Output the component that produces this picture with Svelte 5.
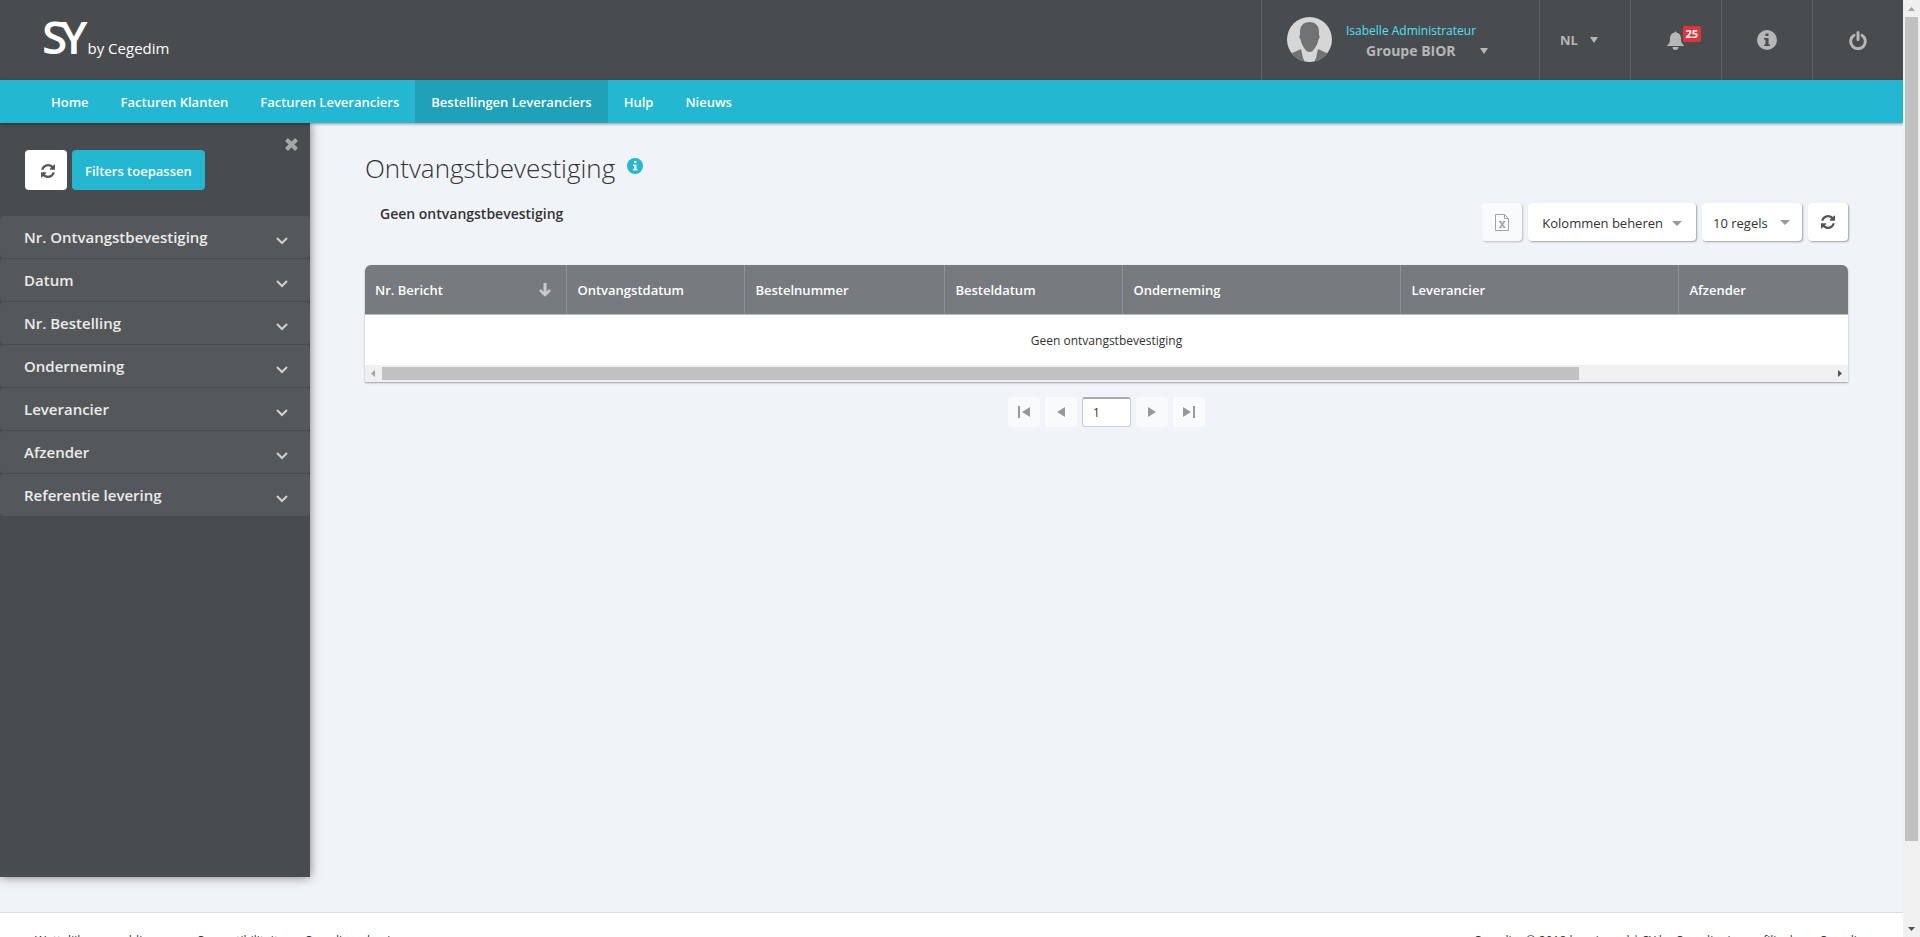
<script>
  const navItems = [
    'Home',
    'Facturen Klanten',
    'Facturen Leveranciers',
    'Bestellingen Leveranciers',
    'Hulp',
    'Nieuws'
  ];

  const filters = [
    'Nr. Ontvangstbevestiging',
    'Datum',
    'Nr. Bestelling',
    'Onderneming',
    'Leverancier',
    'Afzender',
    'Referentie levering'
  ];

  const columns = [
    { label: 'Nr. Bericht', width: 202, sorted: true },
    { label: 'Ontvangstdatum', width: 178 },
    { label: 'Bestelnummer', width: 200 },
    { label: 'Besteldatum', width: 178 },
    { label: 'Onderneming', width: 278 },
    { label: 'Leverancier', width: 278 },
    { label: 'Afzender', width: 169 }
  ];
  const total = columns.reduce((sum, c) => sum + c.width, 0);

  let active = 'Bestellingen Leveranciers';
  let sidebarOpen = true;
  let openFilter = null;
  let pageNumber = '1';
  let pageSize = '10 regels';

  const toggleFilter = (name) => {
    openFilter = openFilter === name ? null : name;
  };
</script>

{#snippet refreshIcon()}
  <svg width="14" height="14" viewBox="0 0 1536 1536" aria-hidden="true">
    <path
      fill="currentColor"
      d="M1511 928q0 5-1 7-64 268-268 434.500T764 1536q-146 0-282.500-55T238 1324l-129 129q-19 19-45 19t-45-19-19-45V960q0-26 19-45t45-19h448q26 0 45 19t19 45-19 45l-137 137q71 66 161 102t187 36q134 0 250-65t186-179q11-17 53-117 8-23 30-23h192q13 0 22.500 9.500t9.500 22.500zm25-800v448q0 26-19 45t-45 19h-448q-26 0-45-19t-19-45 19-45l138-138Q969 256 768 256q-134 0-250 65T332 500q-11 17-53 117-8 23-30 23H50q-13 0-22.500-9.500T18 608v-7q65-268 270-434.500T768 0q146 0 284 55.500T1297 212l130-129q19-19 45-19t45 19 19 45z"
    />
  </svg>
{/snippet}

{#snippet caret(width, height)}
  <svg {width} {height} viewBox="0 0 10 10" preserveAspectRatio="none" aria-hidden="true">
    <path fill="currentColor" d="M0 0h10L5 10z" />
  </svg>
{/snippet}

<div class="window">
  <div class="page">
    <header class="topbar">
      <a class="logo" href="#home" aria-label="SY by Cegedim">
        <span class="mark"><span>S</span><span class="mark-y">Y</span></span>
        <span class="by">by Cegedim</span>
      </a>
      <div class="tools">
        <button class="tool user">
          <svg class="avatar" width="45" height="45" viewBox="0 0 45 45" aria-hidden="true">
            <defs>
              <clipPath id="face"><circle cx="22.500" cy="22.500" r="22.500" /></clipPath>
            </defs>
            <g clip-path="url(#face)">
              <rect width="45" height="45" fill="#d6d6d6" />
              <path fill="#717273" d="M22.500 5c6 0 9.500 4 9.500 9.500v4c1 0 1 2-.5 4-1 5-3.500 9-6 11.500q-3 2-6 0c-2.500-2.500-5-6.500-6-11.500-1.500-2-1.500-4-.5-4v-4C13 9 16.500 5 22.500 5z" />
              <path fill="#717273" d="M14 32L3 37v8h15l-2-4zM31 32l11 5v8H27l2-4z" />
            </g>
          </svg>
          <span class="who">
            <span class="name">Isabelle Administrateur</span>
            <span class="group">Groupe BIOR {@render caret(8, 6)}</span>
          </span>
        </button>
        <button class="tool lang">NL {@render caret(8, 6)}</button>
        <button class="tool" aria-label="Meldingen">
          <span class="bell">
            <svg width="17" height="19" viewBox="0 0 17 19" aria-hidden="true">
              <path fill="currentColor" d="M7.500 1.500a1 1 0 0 1 2 0C13 2.300 14 5 14 8c0 3.500 1 5 3 6.500V15H0v-.5C2 13 3 11.500 3 8c0-3 1-5.700 4.500-6.500zM5.500 16h6c0 1.800-1.300 3-3 3s-3-1.200-3-3z" />
            </svg>
            <span class="badge">25</span>
          </span>
        </button>
        <button class="tool" aria-label="Informatie">
          <svg width="20" height="20" viewBox="0 0 20 20" aria-hidden="true">
            <circle cx="10" cy="10" r="10" fill="currentColor" />
            <path fill="#494c4e" d="M8.500 3.500h3v2.500h-3zM7 8h4.500v6.500H13V16H7v-1.500h1.500v-5H7z" />
          </svg>
        </button>
        <button class="tool" aria-label="Afmelden">
          <svg width="18" height="19" viewBox="0 0 18 19" fill="none" stroke="currentColor" stroke-width="3" stroke-linecap="round" aria-hidden="true">
            <path d="M5 4.300a7.300 7.300 0 1 0 8 0M9 1.500v7" />
          </svg>
        </button>
      </div>
    </header>

    <nav class="menu">
      {#each navItems as item}
        <a href="#menu" class:active={item === active} on:click={() => (active = item)}>{item}</a>
      {/each}
    </nav>

    <div class="body">
      {#if sidebarOpen}
        <aside class="sidebar">
          <button class="close" aria-label="Sluiten" on:click={() => (sidebarOpen = false)}>
            <svg width="13" height="13" viewBox="0 0 13 13" stroke="currentColor" stroke-width="4" aria-hidden="true">
              <path d="M1.500 1.500l10 10M11.500 1.500l-10 10" />
            </svg>
          </button>
          <div class="actions">
            <button class="reset" aria-label="Filters wissen">{@render refreshIcon()}</button>
            <button class="apply">Filters toepassen</button>
          </div>
          <div class="filters">
            {#each filters as filter}
              <button aria-expanded={openFilter === filter} on:click={() => toggleFilter(filter)}>
                {filter}
                <svg width="12" height="8" viewBox="0 0 12 8" fill="none" stroke="currentColor" stroke-width="2" aria-hidden="true">
                  <path d="M1 1l5 5 5-5" />
                </svg>
              </button>
            {/each}
          </div>
        </aside>
      {/if}

      <main>
        <h1>
          Ontvangstbevestiging
          <svg width="16" height="16" viewBox="0 0 16 16" aria-hidden="true">
            <circle cx="8" cy="8" r="8" fill="#23b7d1" />
            <path fill="#eef3f9" d="M7 3h2.500v2H7zM6 6.500h3.500V11h1v1.500H6V11h1V8H6z" />
          </svg>
        </h1>

        <div class="toolbar">
          <h2>Geen ontvangstbevestiging</h2>
          <div class="buttons">
            <button class="btn square" disabled aria-label="Exporteren naar Excel">
              <svg width="14" height="17" viewBox="0 0 14 17" fill="none" stroke="#777" aria-hidden="true">
                <path d="M.5 .5h9l4 4v12H.5zM9.500 .5v4h4M4 7.500h2.500M8 7.500h2.500M4 13.500h2.500M8 13.500h2.500" />
                <path stroke-width="1.400" d="M5 7.500l4.500 6M9.500 7.500l-4.500 6" />
              </svg>
            </button>
            <button class="btn">Kolommen beheren <span class="arrow">{@render caret(10, 5)}</span></button>
            <span class="pick">
              <select class="btn" bind:value={pageSize} aria-label="Aantal regels">
                <option>10 regels</option>
                <option>25 regels</option>
                <option>50 regels</option>
              </select>
              <span class="arrow pick-arrow">{@render caret(10, 5)}</span>
            </span>
            <button class="btn square" aria-label="Vernieuwen">{@render refreshIcon()}</button>
          </div>
        </div>

        <div class="grid">
          <table>
            <colgroup>
              {#each columns as column}
                <col style="width: {(column.width / total) * 100}%" />
              {/each}
            </colgroup>
            <thead>
              <tr>
                {#each columns as column}
                  <th scope="col">
                    <span class="head">
                      {column.label}
                      {#if column.sorted}
                        <svg width="12" height="14" viewBox="0 0 12 14" fill="none" stroke="#c9cbcd" aria-hidden="true">
                          <path stroke-width="3" d="M6 0v11" />
                          <path stroke-width="2.500" d="M1 7l5 5 5-5" />
                        </svg>
                      {/if}
                    </span>
                  </th>
                {/each}
              </tr>
            </thead>
            <tbody>
              <tr>
                <td colspan={columns.length}>Geen ontvangstbevestiging</td>
              </tr>
            </tbody>
          </table>
          <div class="hscroll">
            <svg width="17" height="17" viewBox="0 0 17 17" aria-hidden="true">
              <path fill="#a3a3a3" d="M10 5v7L6 8.500z" />
            </svg>
            <div class="track"><div class="thumb"></div></div>
            <svg width="17" height="17" viewBox="0 0 17 17" aria-hidden="true">
              <path fill="#505050" d="M7 5v7l4-3.500z" />
            </svg>
          </div>
        </div>

        <div class="pager">
          <button aria-label="Eerste pagina">
            <svg width="12" height="12" viewBox="0 0 12 12" aria-hidden="true"><path fill="currentColor" d="M0 0h2v12H0zM12 1v10L4 6z" /></svg>
          </button>
          <button aria-label="Vorige pagina">
            <svg width="8" height="10" viewBox="0 0 8 10" aria-hidden="true"><path fill="currentColor" d="M8 0v10L0 5z" /></svg>
          </button>
          <input type="text" bind:value={pageNumber} aria-label="Pagina" />
          <button aria-label="Volgende pagina">
            <svg width="8" height="10" viewBox="0 0 8 10" aria-hidden="true"><path fill="currentColor" d="M0 0v10l8-5z" /></svg>
          </button>
          <button aria-label="Laatste pagina">
            <svg width="12" height="12" viewBox="0 0 12 12" aria-hidden="true"><path fill="currentColor" d="M10 0h2v12h-2zM0 1v10l8-5z" /></svg>
          </button>
        </div>
      </main>
    </div>

    <footer>
      <div class="links">
        <a href="#legal">Wettelijke vermeldingen</a>
        <a href="#compat">Compatibiliteit</a>
        <a href="#cegedim">Cegedim e-business</a>
      </div>
      <span>Cegedim © 2018 hernieuwd | SY by Cegedim is een filiaal van Cegedim</span>
    </footer>
  </div>

  <div class="vscroll">
    <svg width="17" height="17" viewBox="0 0 17 17" aria-hidden="true">
      <path fill="#a3a3a3" d="M5 11h7L8.500 7z" />
    </svg>
    <div class="vtrack"><div class="vthumb"></div></div>
    <svg width="17" height="17" viewBox="0 0 17 17" aria-hidden="true">
      <path fill="#505050" d="M5 7h7l-3.500 4z" />
    </svg>
  </div>
</div>

<style>
  :global(body) {
    margin: 0;
    background: #f0f3f8;
  }

  .window {
    display: flex;
    height: 100vh;
    overflow: hidden;
    font-family: "Open Sans", "Noto Sans", sans-serif;
    font-size: 13px;
    color: #333;
  }

  .page {
    flex: 1;
    min-width: 0;
    display: flex;
    flex-direction: column;
    overflow: hidden;
  }

  button,
  select,
  input {
    font: inherit;
    color: inherit;
    margin: 0;
    border: 0;
    padding: 0;
    background: none;
  }

  button {
    cursor: pointer;
  }

  a {
    color: inherit;
    text-decoration: none;
  }

  svg {
    flex: none;
  }

  .topbar {
    flex: none;
    display: flex;
    justify-content: space-between;
    height: 80px;
    background: #494c4e;
    color: #b5b7b8;
  }

  .logo {
    display: flex;
    align-items: baseline;
    padding-left: 42px;
    color: #fff;
  }

  .mark {
    font-size: 46px;
    font-weight: 600;
    line-height: 72px;
  }

  .mark-y {
    margin-left: -7px;
  }

  .by {
    font-size: 15px;
  }

  .tools {
    display: flex;
  }

  .tool {
    display: flex;
    align-items: center;
    justify-content: center;
    width: 91px;
    border-left: 1px solid #5d6062;
  }

  .user {
    justify-content: flex-start;
    gap: 15px;
    width: 278px;
    padding: 0 0 2px 25px;
    gap: 14px;
  }

  .who {
    display: flex;
    flex-direction: column;
    padding-top: 4px;
    line-height: 20px;
    text-align: left;
  }

  .name {
    font-size: 12px;
    color: #4de1f5;
  }

  .group {
    display: flex;
    align-items: center;
    gap: 24px;
    padding-left: 20px;
    font-size: 14px;
    font-weight: 700;
  }

  .lang {
    gap: 12px;
    padding-right: 12px;
    font-weight: 700;
  }

  .bell {
    position: relative;
    display: flex;
    padding-right: 2px;
  }

  .badge {
    position: absolute;
    left: 16px;
    top: -5px;
    border-radius: 2px;
    padding: 0 3px;
    font-size: 11px;
    font-weight: 700;
    line-height: 16px;
    color: #fff;
    background: #e0333c;
  }

  .menu {
    flex: none;
    position: relative;
    z-index: 2;
    display: flex;
    padding-left: 35px;
    background: #23b7d1;
    box-shadow: 0 1px 3px rgba(0, 0, 0, 0.4);
  }

  .menu a {
    padding: 1px 16px 0;
    font-weight: 600;
    line-height: 42px;
    color: #fff;
  }

  .menu a.active {
    background: #1fa2b7;
  }

  .body {
    flex: 1;
    min-height: 0;
    display: flex;
    background: #f0f3f8;
  }

  .sidebar {
    position: relative;
    flex: none;
    width: 310px;
    margin-bottom: 35px;
    background: #494c4e;
    box-shadow: 0 0 10px rgba(0, 0, 0, 0.5);
  }

  .close {
    position: absolute;
    top: 15px;
    right: 12px;
    display: flex;
    color: #a5a7a8;
  }

  .actions {
    display: flex;
    gap: 5px;
    padding: 27px 25px 26px;
  }

  .reset {
    display: flex;
    align-items: center;
    justify-content: center;
    box-sizing: border-box;
    width: 42px;
    height: 40px;
    padding: 2px 0 0 4px;
    border-radius: 4px;
    color: #555;
    background: #fff;
  }

  .apply {
    padding: 2px 13px 0;
    border-radius: 4px;
    font-weight: 600;
    color: #fff;
    background: #23b7d1;
  }

  .filters {
    display: flex;
    flex-direction: column;
    gap: 1px;
  }

  .filters button {
    display: flex;
    align-items: center;
    justify-content: space-between;
    height: 42px;
    padding: 0 22px 0 24px;
    border-radius: 4px;
    font-size: 15px;
    font-weight: 600;
    color: #ebebeb;
    background: #55585a;
  }

  .filters svg {
    margin-top: 7px;
    color: #cfd0d1;
  }

  main {
    flex: 1;
    min-width: 0;
    padding: 27px 55px 0;
  }

  h1 {
    display: flex;
    align-items: center;
    gap: 12px;
    margin: 0;
    font-size: 26px;
    font-weight: 300;
    line-height: 36px;
  }

  h1 svg {
    margin-bottom: 4px;
  }

  .toolbar {
    display: flex;
    justify-content: space-between;
    margin-top: 17px;
  }

  h2 {
    margin: 0;
    padding-left: 15px;
    font-size: 14px;
    font-weight: 600;
    line-height: 22px;
  }

  .buttons {
    display: flex;
    gap: 6px;
  }

  .btn {
    display: flex;
    align-items: center;
    gap: 9px;
    box-sizing: border-box;
    height: 38px;
    padding: 2px 14px 0;
    border-radius: 4px;
    font-size: 13px;
    background: #fff;
    box-shadow: 1px 1px 2px rgba(0, 0, 0, 0.35);
  }

  .btn svg {
    color: #555;
  }

  .square {
    justify-content: center;
    width: 40px;
    padding: 0;
  }

  .btn:disabled {
    opacity: 0.65;
  }

  .arrow {
    display: flex;
  }

  .arrow svg {
    color: #999;
  }

  .pick {
    position: relative;
  }

  .pick select {
    appearance: none;
    width: 100px;
    padding: 2px 11px 0;
  }

  .pick-arrow {
    position: absolute;
    top: 17px;
    right: 12px;
    pointer-events: none;
  }

  .grid {
    margin-top: 24px;
    border-radius: 6px 6px 0 0;
    overflow: hidden;
    background: #fff;
    box-shadow: 0 1px 2px rgba(0, 0, 0, 0.35);
  }

  table {
    width: 100%;
    table-layout: fixed;
    border-collapse: collapse;
  }

  th {
    height: 48px;
    padding: 1px 15px 0 10px;
    border-right: 1px solid #8f9295;
    border-bottom: 1px solid #b9bcbf;
    font-weight: 600;
    text-align: left;
    color: #fff;
    background: #777a7e;
  }

  th:last-child {
    border-right: 0;
  }

  .head {
    display: flex;
    align-items: center;
    justify-content: space-between;
  }

  td {
    height: 50px;
    padding: 0;
    font-size: 12px;
    text-align: center;
  }

  .hscroll {
    display: flex;
    background: #f0f0f0;
  }

  .track {
    flex: 1;
    padding: 2px 0;
  }

  .thumb {
    width: 82.6%;
    height: 13px;
    background: #c1c1c1;
  }

  .pager {
    display: flex;
    justify-content: center;
    gap: 5px;
    margin-top: 15px;
  }

  .pager button {
    display: flex;
    align-items: center;
    justify-content: center;
    width: 32px;
    height: 30px;
    border-radius: 4px;
    color: #97999b;
    background: #f9fafc;
  }

  .pager input {
    box-sizing: border-box;
    width: 49px;
    height: 30px;
    padding: 0 10px;
    border: 1px solid #ccc;
    border-top: 2px solid #aaa;
    border-radius: 3px;
    font-size: 12px;
    background: #fff;
  }

  footer {
    flex: none;
    box-sizing: border-box;
    display: flex;
    justify-content: space-between;
    height: 25px;
    padding: 19px 35px 0;
    border-top: 1px solid #d8dadd;
    font-size: 12px;
    line-height: 17px;
    background: #fff;
  }

  .links {
    display: flex;
    gap: 26px;
  }

  .vscroll {
    flex: none;
    display: flex;
    flex-direction: column;
    width: 17px;
    background: #f0f0f0;
  }

  .vtrack {
    flex: 1;
    padding: 0 2px;
  }

  .vthumb {
    height: 91.3%;
    background: #c1c1c1;
  }
</style>
